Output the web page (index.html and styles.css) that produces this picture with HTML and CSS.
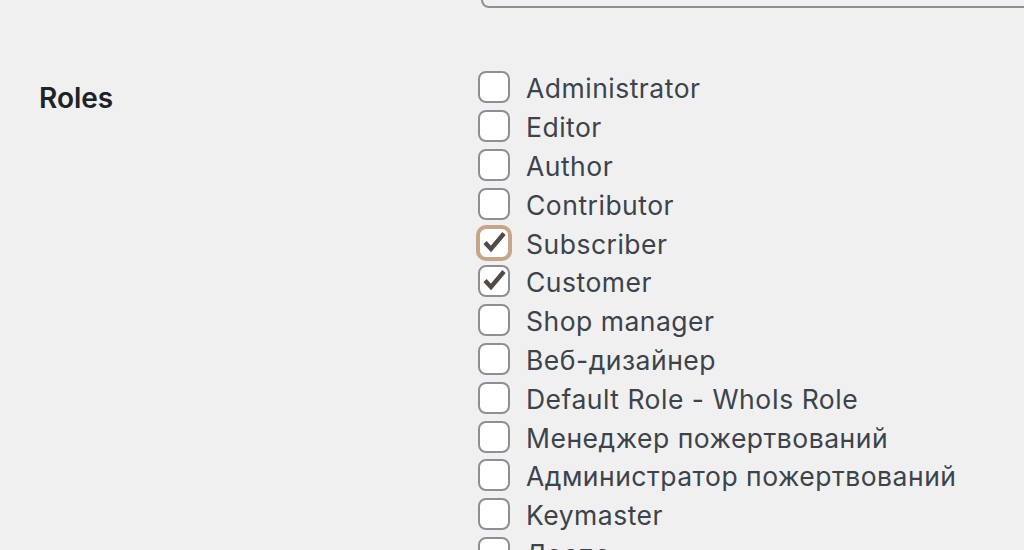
FILE: index.html
```html
<!DOCTYPE html>
<html lang="en">
<head>
  <meta charset="UTF-8">
  <title>Edit User - Roles</title>
  <link rel="stylesheet" href="styles.css">
</head>
<body>

<div class="prev-row">
  <div class="prev-field"></div>
</div>

<div class="form-row">
  <div class="row-label">Roles</div>
  <div class="row-field">
    <label class="role"><span class="box"></span>Administrator</label>
    <label class="role"><span class="box"></span>Editor</label>
    <label class="role"><span class="box"></span>Author</label>
    <label class="role"><span class="box"></span>Contributor</label>
    <label class="role"><span class="box checked focus"><svg viewBox="0 0 32 32"><polyline points="7,15.5 13,22 26,6.5"/></svg></span>Subscriber</label>
    <label class="role"><span class="box checked"><svg viewBox="0 0 32 32"><polyline points="7,15.5 13,22 26,6.5"/></svg></span>Customer</label>
    <label class="role"><span class="box"></span>Shop manager</label>
    <label class="role"><span class="box"></span>Веб-дизайнер</label>
    <label class="role"><span class="box"></span>Default Role - WhoIs Role</label>
    <label class="role"><span class="box"></span>Менеджер пожертвований</label>
    <label class="role"><span class="box"></span>Администратор пожертвований</label>
    <label class="role"><span class="box"></span>Keymaster</label>
    <label class="role"><span class="box"></span>Лоспо</label>
  </div>
</div>

</body>
</html>
```

FILE: styles.css
```css
body {
  margin: 0;
  background: #f0f0f1;
  font-family: Inter, "Open Sans", sans-serif;
  color: #3c434a;
  overflow: hidden;
}
.prev-row {
  padding-left: 481px;
}
.prev-field {
  height: 6px;
  border: 2px solid #8c8f94;
  border-top: none;
  border-radius: 0 0 8px 8px;
  margin-right: -40px;
}
.form-row {
  display: flex;
  padding-top: 61px;
}
.row-label {
  width: 439px;
  padding-left: 39px;
  padding-top: 11px;
  font-size: 28px;
  line-height: 36px;
  font-weight: 600;
  color: #1d2327;
}
.row-field {
  display: flex;
  flex-direction: column;
}
.role {
  display: flex;
  align-items: center;
  gap: 16px;
  height: 38.8px;
  font-size: 26.5px;
  letter-spacing: 0.5px;
}
.box {
  box-sizing: border-box;
  width: 32px;
  height: 32px;
  border: 2px solid #8c8f94;
  border-radius: 8px;
  background: white;
  display: flex;
  align-items: center;
  justify-content: center;
  margin-top: -2px;
  flex-shrink: 0;
}
.box svg {
  width: 32px;
  height: 32px;
  flex-shrink: 0;
  fill: none;
  stroke: #524b45;
  stroke-width: 4.4;
}
.box.focus {
  border-color: #c7a589;
  box-shadow: 0 0 0 2px #c7a589;
}
```
